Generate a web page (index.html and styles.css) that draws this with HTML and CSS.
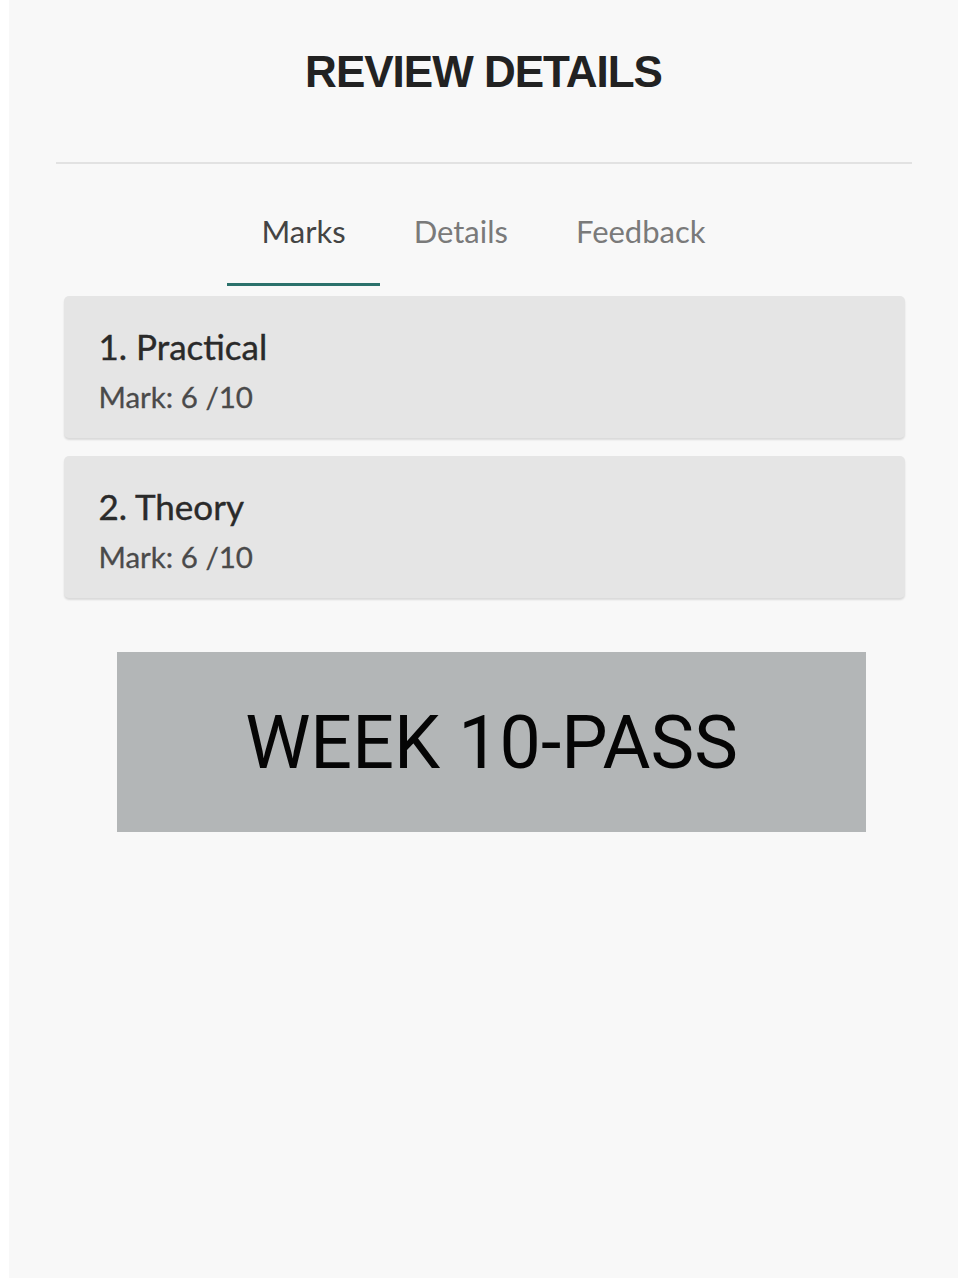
FILE: index.html
```html
<!DOCTYPE html>
<html lang="en">
<head>
<meta charset="utf-8">
<title>Review Details</title>
<link rel="stylesheet" href="styles.css">
</head>
<body>
<div class="page">
  <h1 class="title">REVIEW DETAILS</h1>
  <hr class="divider">
  <nav class="tabs">
    <div class="tab active">Marks</div>
    <div class="tab">Details</div>
    <div class="tab">Feedback</div>
  </nav>
  <div class="cards">
    <div class="card">
      <div class="card-title">1. Practical</div>
      <div class="card-mark">Mark: 6 /10</div>
    </div>
    <div class="card">
      <div class="card-title">2. Theory</div>
      <div class="card-mark">Mark: 6 /10</div>
    </div>
  </div>
  <div class="banner">WEEK 10-PASS</div>
</div>
</body>
</html>
```
FILE: styles.css
```css
html, body {
  margin: 0;
  padding: 0;
  background: #ffffff;
}

.page {
  margin-left: 9px;
  height: 1278px;
  background: #f8f8f8;
  display: flex;
  flex-direction: column;
  align-items: center;
}

.title {
  margin: 46px 0 0;
  font-family: "Liberation Sans", Arial, sans-serif;
  font-weight: bold;
  font-size: 44px;
  line-height: 52px;
  letter-spacing: -1px;
  color: #222222;
}

.divider {
  align-self: stretch;
  margin: 64px 46px 0 47px;
  border: 0;
  height: 2px;
  background: #e2e2e2;
}

.tabs {
  display: flex;
  margin-top: 38px;
  font-family: Lato, "Open Sans", sans-serif;
  font-size: 31px;
}

.tab {
  padding: 0 34px;
  height: 84px;
  line-height: 58px;
  color: #7a7a7a;
  box-sizing: border-box;
  border-bottom: 3px solid transparent;
}

.tab.active {
  color: #444444;
  border-bottom-color: #2b716b;
}

.cards {
  display: flex;
  flex-direction: column;
  gap: 18px;
  margin-top: 10px;
  margin-left: 1px;
  width: 841px;
}

.card {
  height: 142px;
  box-sizing: border-box;
  padding: 27px 35px 0;
  background: #e5e5e5;
  border-radius: 5px;
  box-shadow: 0 2px 2px rgba(0, 0, 0, 0.12);
  font-family: Lato, "Open Sans", sans-serif;
}

.card-title {
  font-size: 35px;
  line-height: 46px;
  color: #2a2a2a;
  -webkit-text-stroke: 0.4px #2a2a2a;
}

.card-mark {
  margin-top: 11px;
  font-size: 29.5px;
  line-height: 34px;
  color: #4a4a4a;
  -webkit-text-stroke: 0.3px #4a4a4a;
}

.banner {
  margin-top: 54px;
  margin-left: 16px;
  width: 749px;
  height: 180px;
  background: #b3b6b7;
  display: flex;
  align-items: center;
  justify-content: center;
  font-family: Roboto, sans-serif;
  font-size: 73.5px;
  color: #050505;
  padding-top: 2px;
  box-sizing: border-box;
}
```
